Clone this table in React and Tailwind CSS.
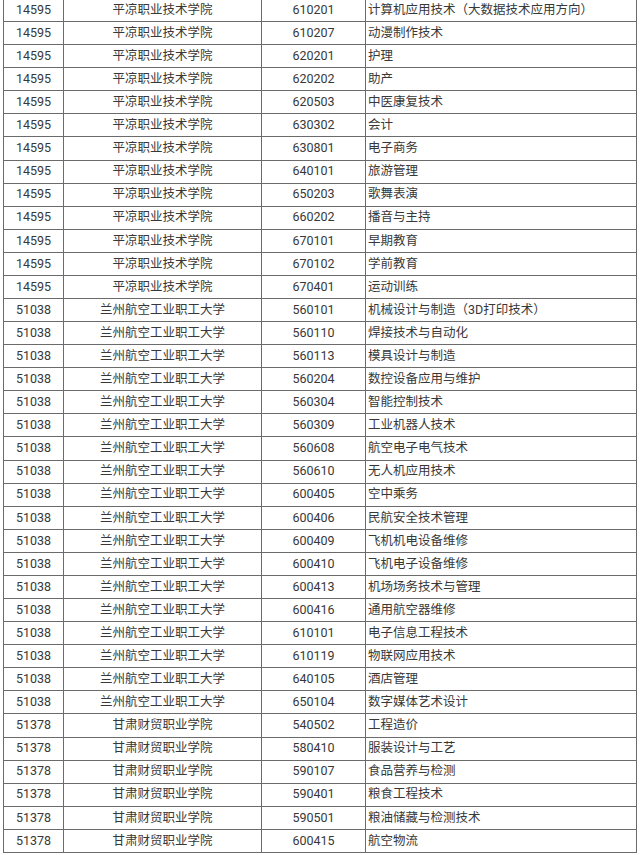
const SCHOOLS = {
  '14595': '平凉职业技术学院',
  '51038': '兰州航空工业职工大学',
  '51378': '甘肃财贸职业学院',
};

const ROWS = [
  ['14595', '610201', '计算机应用技术（大数据技术应用方向）'],
  ['14595', '610207', '动漫制作技术'],
  ['14595', '620201', '护理'],
  ['14595', '620202', '助产'],
  ['14595', '620503', '中医康复技术'],
  ['14595', '630302', '会计'],
  ['14595', '630801', '电子商务'],
  ['14595', '640101', '旅游管理'],
  ['14595', '650203', '歌舞表演'],
  ['14595', '660202', '播音与主持'],
  ['14595', '670101', '早期教育'],
  ['14595', '670102', '学前教育'],
  ['14595', '670401', '运动训练'],
  ['51038', '560101', '机械设计与制造（3D打印技术）'],
  ['51038', '560110', '焊接技术与自动化'],
  ['51038', '560113', '模具设计与制造'],
  ['51038', '560204', '数控设备应用与维护'],
  ['51038', '560304', '智能控制技术'],
  ['51038', '560309', '工业机器人技术'],
  ['51038', '560608', '航空电子电气技术'],
  ['51038', '560610', '无人机应用技术'],
  ['51038', '600405', '空中乘务'],
  ['51038', '600406', '民航安全技术管理'],
  ['51038', '600409', '飞机机电设备维修'],
  ['51038', '600410', '飞机电子设备维修'],
  ['51038', '600413', '机场场务技术与管理'],
  ['51038', '600416', '通用航空器维修'],
  ['51038', '610101', '电子信息工程技术'],
  ['51038', '610119', '物联网应用技术'],
  ['51038', '640105', '酒店管理'],
  ['51038', '650104', '数字媒体艺术设计'],
  ['51378', '540502', '工程造价'],
  ['51378', '580410', '服装设计与工艺'],
  ['51378', '590107', '食品营养与检测'],
  ['51378', '590401', '粮食工程技术'],
  ['51378', '590501', '粮油储藏与检测技术'],
  ['51378', '600415', '航空物流'],
];

export default function App() {
  return (
    <div
      className="w-[640px] h-[855px] overflow-hidden bg-white pl-[3px] pr-[3px]"
      style={{ fontFamily: 'Roboto, "Noto Sans CJK SC", sans-serif' }}
    >
      <table className="-mt-[2px] w-[634px] table-fixed border-collapse border-[1.5px] border-[#6b6b6b] text-[12.5px] leading-none text-[#383838]">
        <colgroup>
          <col className="w-[60px]" />
          <col className="w-[198px]" />
          <col className="w-[104px]" />
          <col />
        </colgroup>
        <tbody>
          {ROWS.map(([code, major, name], i) => (
            <tr key={i} className="h-[23.08px]">
              <td className="border border-[#6b6b6b] text-center">{code}</td>
              <td className="border border-[#6b6b6b] text-center">{SCHOOLS[code]}</td>
              <td className="border border-[#6b6b6b] text-center">{major}</td>
              <td className="border border-[#6b6b6b] pl-[2px] text-left whitespace-nowrap">{name}</td>
            </tr>
          ))}
        </tbody>
      </table>
    </div>
  );
}
